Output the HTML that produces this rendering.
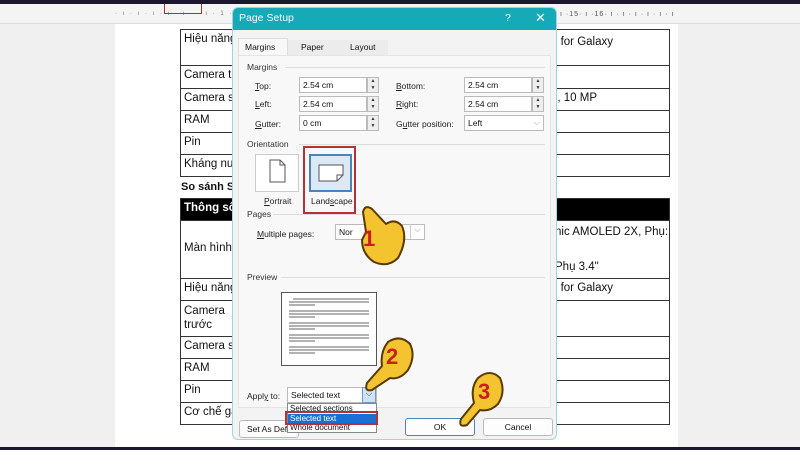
<!DOCTYPE html>
<html><head><meta charset="utf-8"><style>
*{margin:0;padding:0;box-sizing:border-box}
body{width:800px;height:450px;overflow:hidden;background:#1e1530;position:relative;font-family:"Liberation Sans",sans-serif;font-size:11px;color:#111}
.a{position:absolute}
#scr{left:0;top:4px;width:800px;height:443px;background:#f0f0f0;overflow:hidden}
#ruler{left:0;top:0;width:800px;height:20px;background:#f4f4f4;border-bottom:1px solid #ddd}
#page{left:115px;top:20px;width:563px;height:430px;background:#fff}
.row{position:absolute;left:180px;width:490px;border:1px solid #333;border-bottom:none;font-size:11.5px;padding:3px 3px}
.dlg{left:232px;top:7px;width:325px;height:433px;background:#f3f3f3;border:1px solid #9fd6dc;border-radius:6px;overflow:hidden}
.title{left:0;top:0;width:325px;height:22px;background:#16a9b8;color:#fff;font-size:10.5px;padding:4px 6px}
.inp{position:absolute;height:16px;background:#fff;border:1px solid #bbb;font-size:8.5px;padding:2px 3px}
.spin{position:absolute;width:12px;height:16px;background:#eee;border:1px solid #bbb;font-size:5px;line-height:7px;text-align:center;color:#333}
.lbl{position:absolute;font-size:8.5px;color:#222}
.sec{position:absolute;font-size:8.5px;color:#333}
.line{position:absolute;height:1px;background:#ddd}
.btn{position:absolute;height:18px;background:#fdfdfd;border:1px solid #bbb;border-radius:3px;font-size:8.5px;text-align:center;line-height:16px;white-space:nowrap;overflow:hidden}
</style></head><body>
<div id="scr" class="a">
 <div id="ruler" class="a">
  <div class="a" style="left:115px;top:7px;font-size:6px;color:#777;letter-spacing:2px">· ı · ı · ı · ı · ı · · ı · 1 · ı · 2</div>
  <div class="a" style="left:560px;top:7px;font-size:7px;color:#555;letter-spacing:1px">ı ·15· ı ·16· ı · ı · ı · ı · ı · ı</div>
  <div class="a" style="left:164px;top:-4px;width:38px;height:14px;border:1px solid #a33"></div>
 </div>
 <div id="page" class="a"></div>
 <div class="row" style="top:25px;height:36px">Hiệu năng<span class="a" style="left:370px;top:6px">2 for Galaxy</span></div>
 <div class="row" style="top:61px;height:23px">Camera trư</div>
 <div class="row" style="top:84px;height:22px">Camera sa<span class="a" style="left:370px;top:3px">?, 10 MP</span></div>
 <div class="row" style="top:106px;height:22px">RAM</div>
 <div class="row" style="top:128px;height:22px">Pin</div>
 <div class="row" style="top:150px;height:23px;border-bottom:1px solid #333">Kháng nướ</div>
 <div class="a" style="left:181px;top:177px;font-size:11px;font-weight:bold">So sánh Sa</div>
 <div class="row" style="top:194px;height:22px;background:#000;color:#fff;font-weight:bold">Thông số</div>
 <div class="row" style="top:216px;height:58px"><span class="a" style="top:21px;left:3px">Màn hình</span><span class="a" style="left:374px;top:5px">nic AMOLED 2X, Phụ:</span><span class="a" style="left:374px;top:40px">Phụ 3.4"</span></div>
 <div class="row" style="top:274px;height:22px">Hiệu năng<span class="a" style="left:370px;top:3px">3 for Galaxy</span></div>
 <div class="row" style="top:296px;height:36px;line-height:14px">Camera<br>trước</div>
 <div class="row" style="top:332px;height:22px">Camera sa</div>
 <div class="row" style="top:354px;height:22px">RAM</div>
 <div class="row" style="top:376px;height:22px">Pin</div>
 <div class="row" style="top:398px;height:23px;border-bottom:1px solid #333">Cơ chế gậ</div>
</div>

<div class="a dlg">
 <div class="a title">Page Setup<span class="a" style="left:272px;top:4px">?</span><span class="a" style="left:302px;top:2px;font-size:13px">✕</span></div>
 <div class="a" style="left:5px;top:30px;width:50px;height:17px;background:#f8f8f8;border:1px solid #ddd;border-bottom:none;font-size:8.5px;padding:3px 6px">Margins</div>
 <div class="a" style="left:55px;top:32px;width:50px;height:15px;background:#ececec;font-size:8.5px;padding:2px 13px">Paper</div>
 <div class="a" style="left:105px;top:32px;width:50px;height:15px;background:#ececec;font-size:8.5px;padding:2px 12px">Layout</div>
 <div class="a" style="left:5px;top:47px;width:313px;height:353px;background:#f8f8f8;border:1px solid #e4e4e4"></div>
 <div class="sec" style="left:14px;top:54px">Margins</div><div class="line" style="left:52px;top:59px;width:260px"></div>
 <div class="lbl" style="left:22px;top:73px"><u>T</u>op:</div>
 <div class="inp" style="left:66px;top:69px;width:68px">2.54 cm</div><div class="spin" style="left:134px;top:69px">▲<br>▼</div>
 <div class="lbl" style="left:22px;top:91px"><u>L</u>eft:</div>
 <div class="inp" style="left:66px;top:88px;width:68px">2.54 cm</div><div class="spin" style="left:134px;top:88px">▲<br>▼</div>
 <div class="lbl" style="left:22px;top:111px"><u>G</u>utter:</div>
 <div class="inp" style="left:66px;top:107px;width:68px">0 cm</div><div class="spin" style="left:134px;top:107px">▲<br>▼</div>
 <div class="lbl" style="left:163px;top:73px"><u>B</u>ottom:</div>
 <div class="inp" style="left:231px;top:69px;width:68px">2.54 cm</div><div class="spin" style="left:299px;top:69px">▲<br>▼</div>
 <div class="lbl" style="left:163px;top:91px"><u>R</u>ight:</div>
 <div class="inp" style="left:231px;top:88px;width:68px">2.54 cm</div><div class="spin" style="left:299px;top:88px">▲<br>▼</div>
 <div class="lbl" style="left:163px;top:111px">G<u>u</u>tter position:</div>
 <div class="inp" style="left:231px;top:107px;width:80px">Left<span class="a" style="right:3px;top:1px;color:#999">⌵</span></div>
 <div class="sec" style="left:14px;top:131px">Orientation</div><div class="line" style="left:66px;top:136px;width:246px"></div>
 <div class="a" style="left:22px;top:146px;width:44px;height:38px;background:#fff;border:1px solid #ccc"></div>
 <svg class="a" style="left:36px;top:151px" width="17" height="24"><path d="M1 1H11L16 6V23H1Z M11 1V6H16" fill="#fff" stroke="#555"/></svg>
 <div class="lbl" style="left:31px;top:188px"><u>P</u>ortrait</div>
 <div class="a" style="left:76px;top:146px;width:43px;height:38px;background:#dbe8f5;border:2px solid #4d84b8"></div>
 <svg class="a" style="left:85px;top:156px" width="26" height="18"><path d="M1 1H25V11L19 17H1Z M19 17V11H25" fill="#fff" stroke="#555"/></svg>
 <div class="lbl" style="left:78px;top:188px">Land<u>s</u>cape</div>
 <div class="a" style="left:70px;top:138px;width:53px;height:68px;border:2px solid #b2323a"></div>
 <div class="sec" style="left:14px;top:201px">Pages</div><div class="line" style="left:40px;top:206px;width:272px"></div>
 <div class="lbl" style="left:24px;top:221px"><u>M</u>ultiple pages:</div>
 <div class="inp" style="left:102px;top:216px;width:90px">Nor<span class="a" style="right:0;top:-1px;width:14px;height:15px;border-left:1px solid #ccc;color:#999;text-align:center">⌵</span></div>
 <div class="sec" style="left:14px;top:264px">Preview</div><div class="line" style="left:48px;top:269px;width:264px"></div>
 <div class="a" style="left:48px;top:284px;width:96px;height:74px;background:#fff;border:1px solid #555"></div>
 <svg class="a" style="left:56px;top:290px" width="82" height="62" stroke="#666" stroke-width="1">
  <path d="M4 1H80M0 4H80M0 7H26M0 13H80M0 16H80M0 19H26M0 25H80M0 28H80M0 31H26M0 37H80M0 40H80M0 43H26M0 49H80M0 52H80M0 55H26"/></svg>
 <div class="lbl" style="left:14px;top:383px">Appl<u>y</u> to:</div>
 <div class="btn" style="left:6px;top:412px;width:60px;text-align:left;padding-left:7px">Set As Default</div>
 <div class="inp" style="left:54px;top:379px;width:90px">Selected text<span class="a" style="right:0;top:-1px;width:14px;height:16px;background:#cfe3f5;border:1px solid #6a9bcc;color:#333;text-align:center">⌵</span></div>
 <div class="a" style="left:54px;top:395px;width:90px;height:30px;background:#fff;border:1px solid #888;font-size:8px;line-height:9.5px;padding-left:2px">Selected sections<br><span style="display:block;background:#1473d1;color:#fff;margin-left:-2px;padding-left:2px">Selected text</span>Whole document</div>
 <div class="a" style="left:52px;top:403px;width:93px;height:14px;border:2px solid #b2323a"></div>
 <div class="btn" style="left:172px;top:410px;width:70px;border-color:#4d84b8">OK</div>
 <div class="btn" style="left:250px;top:410px;width:70px">Cancel</div>
</div>

<svg class="a" style="left:0;top:0" width="800" height="450">
 <g fill="#f4c430" stroke="#5a3a00" stroke-width="2" stroke-linejoin="round">
  <path d="M363 212 Q365 204 372 209 L386 224 Q395 218 402 226 Q408 240 398 258 Q388 268 374 262 Q362 254 362 240 L366 232 Z"/>
  <path d="M367 383 L382 366 Q380 352 388 342 Q400 334 410 344 Q416 356 408 370 Q400 380 390 378 L372 390 Q364 392 367 383 Z"/>
  <path d="M461 419 L474 403 Q470 388 478 378 Q490 368 500 378 Q506 392 498 404 Q490 412 480 410 L467 425 Q458 428 461 419 Z"/>
 </g>
 <g fill="#c8201a" font-family="Liberation Sans" font-weight="bold" font-size="22">
  <text x="363" y="246">1</text><text x="386" y="364">2</text><text x="478" y="399">3</text>
 </g>
</svg>
</body></html>
